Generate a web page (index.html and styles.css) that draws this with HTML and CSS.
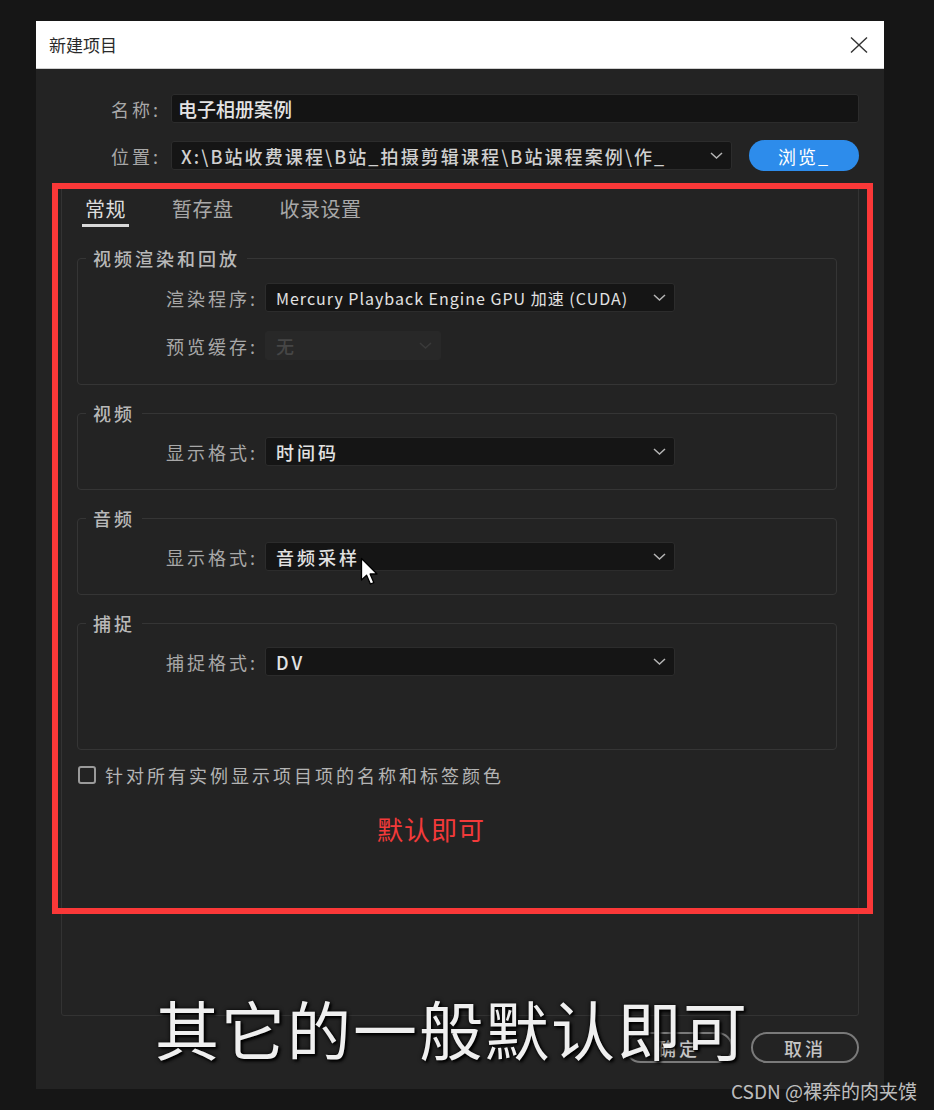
FILE: index.html
```html
<!DOCTYPE html>
<html lang="zh-CN">
<head>
    <meta charset="UTF-8">
    <meta name="viewport" content="width=device-width, initial-scale=1.0">
    <title>新建项目</title>
    <link rel="stylesheet" href="styles.css">
</head>
<body>
    <div class="dialog">
        <div class="titlebar">
            <span class="title">新建项目</span>
            <button class="close-button" aria-label="关闭">
                <svg width="18" height="16" viewBox="0 0 18 16"><path d="M1 0.5 L17 15.5 M17 0.5 L1 15.5" stroke="#333" stroke-width="1.4" fill="none"/></svg>
            </button>
        </div>

        <div class="dialog-body">
            <div class="form-row">
                <span class="form-label">名称:</span>
                <div class="text-input">电子相册案例</div>
            </div>
            <div class="form-row location-row">
                <span class="form-label">位置:</span>
                <div class="select path-select">
                    <span class="select-value">X:\B站收费课程\B站_拍摄剪辑课程\B站课程案例\作_</span>
                    <svg class="chevron" width="13" height="7" viewBox="0 0 13 7"><path d="M1 1 L6.5 6 L12 1" stroke="#b5b5b5" stroke-width="1.5" fill="none"/></svg>
                </div>
                <button class="browse-button">浏览_</button>
            </div>

            <div class="tab-panel">
                <div class="tabs">
                    <span class="tab active">常规</span>
                    <span class="tab">暂存盘</span>
                    <span class="tab">收录设置</span>
                </div>

                <fieldset class="group first-group">
                    <legend>视频渲染和回放</legend>
                    <div class="group-row">
                        <span class="group-label">渲染程序:</span>
                        <div class="select">
                            <span class="select-value latin">Mercury Playback Engine GPU 加速 (CUDA)</span>
                            <svg class="chevron" width="13" height="7" viewBox="0 0 13 7"><path d="M1 1 L6.5 6 L12 1" stroke="#b5b5b5" stroke-width="1.5" fill="none"/></svg>
                        </div>
                    </div>
                    <div class="group-row">
                        <span class="group-label">预览缓存:</span>
                        <div class="select disabled">
                            <span class="select-value">无</span>
                            <svg class="chevron" width="13" height="7" viewBox="0 0 13 7"><path d="M1 1 L6.5 6 L12 1" stroke="#3a3a3a" stroke-width="1.5" fill="none"/></svg>
                        </div>
                    </div>
                </fieldset>

                <fieldset class="group">
                    <legend>视频</legend>
                    <div class="group-row">
                        <span class="group-label">显示格式:</span>
                        <div class="select">
                            <span class="select-value">时间码</span>
                            <svg class="chevron" width="13" height="7" viewBox="0 0 13 7"><path d="M1 1 L6.5 6 L12 1" stroke="#b5b5b5" stroke-width="1.5" fill="none"/></svg>
                        </div>
                    </div>
                </fieldset>

                <fieldset class="group">
                    <legend>音频</legend>
                    <div class="group-row">
                        <span class="group-label">显示格式:</span>
                        <div class="select">
                            <span class="select-value">音频采样</span>
                            <svg class="chevron" width="13" height="7" viewBox="0 0 13 7"><path d="M1 1 L6.5 6 L12 1" stroke="#b5b5b5" stroke-width="1.5" fill="none"/></svg>
                        </div>
                    </div>
                </fieldset>

                <fieldset class="group tall-group">
                    <legend>捕捉</legend>
                    <div class="group-row">
                        <span class="group-label">捕捉格式:</span>
                        <div class="select">
                            <span class="select-value">DV</span>
                            <svg class="chevron" width="13" height="7" viewBox="0 0 13 7"><path d="M1 1 L6.5 6 L12 1" stroke="#b5b5b5" stroke-width="1.5" fill="none"/></svg>
                        </div>
                    </div>
                </fieldset>

                <label class="check-row">
                    <span class="checkbox"></span>
                    针对所有实例显示项目项的名称和标签颜色
                </label>

                <div class="note">默认即可</div>
            </div>

            <div class="button-row">
                <button class="pill-button">确定</button>
                <button class="pill-button">取消</button>
            </div>
        </div>
    </div>

    <!-- 视频标注层 -->
    <div class="mark-box"></div>
    <svg class="cursor" width="20" height="29" viewBox="0 0 20 29">
        <path d="M1.5 1.5 L1.5 23 L6.6 18.2 L10.4 27 L13.8 25.6 L10.1 17 L17 17 Z" fill="#fff" stroke="#000" stroke-width="1.3" stroke-linejoin="round"/>
    </svg>
    <div class="subtitle">其它的一般默认即可</div>
    <div class="watermark">CSDN @裸奔的肉夹馍</div>
</body>
</html>
```

FILE: styles.css
```css
body {
    margin: 0;
    padding: 21px 0 0 36px;
    background: #161616;
    font-family: "Noto Sans CJK SC", "Noto Sans", sans-serif;
    color: #b4b4b4;
    position: relative;
    min-height: 1110px;
    box-sizing: border-box;
}

.dialog {
    width: 848px;
}

.titlebar {
    height: 48px;
    background: #ffffff;
    border-bottom: 1px solid #d0d0d0;
    box-sizing: border-box;
    display: flex;
    align-items: center;
    justify-content: space-between;
    padding: 0 16px 0 13px;
}

.title {
    font-size: 17px;
    color: #2a2a2a;
}

.close-button {
    background: none;
    border: none;
    padding: 0;
    display: flex;
}

.dialog-body {
    background: #232323;
    height: 1020px;
    box-sizing: border-box;
    padding: 25px 25px 0 25px;
}

.form-row {
    display: flex;
    align-items: center;
    height: 29px;
}

.location-row {
    margin-top: 18px;
}

.form-label {
    width: 100px;
    margin-right: 10px;
    text-align: right;
    font-size: 18px;
    letter-spacing: 3px;
    color: #a8a8a8;
}

.text-input {
    flex: 1;
    height: 29px;
    box-sizing: border-box;
    background: #141414;
    border: 1px solid #2c2c2c;
    border-radius: 3px;
    padding-left: 6px;
    font-size: 19px;
    line-height: 27px;
    font-weight: 500;
    color: #e4e4e4;
}

.select {
    width: 410px;
    height: 29px;
    box-sizing: border-box;
    background: #151515;
    border: 1px solid #2c2c2c;
    border-radius: 3px;
    padding: 0 8px 0 10px;
    display: flex;
    align-items: center;
    justify-content: space-between;
}

.select-value {
    font-size: 18px;
    letter-spacing: 3px;
    font-weight: 500;
    color: #e2e2e2;
    white-space: nowrap;
}

.select-value.latin {
    font-size: 16px;
    letter-spacing: 1px;
    font-weight: 400;
}

.path-select {
    flex: 1;
    width: auto;
    padding-left: 9px;
}

.path-select .select-value {
    letter-spacing: 2.1px;
    color: #d0d0d0;
}

.select.disabled {
    width: 176px;
    background: #282828;
    border-color: #282828;
}

.select.disabled .select-value {
    color: #464646;
}

.browse-button {
    width: 110px;
    height: 31px;
    margin-left: 17px;
    border: none;
    border-radius: 16px;
    background: #2d8ceb;
    color: #ffffff;
    font-family: inherit;
    font-size: 18px;
    letter-spacing: 2px;
}

.tab-panel {
    margin-top: 16px;
    height: 830px;
    box-sizing: border-box;
    border: 1px solid #333333;
    border-radius: 3px;
    padding: 10px 0 0 0;
}

.tabs {
    display: flex;
    gap: 40px;
    padding-left: 20px;
}

.tab {
    padding: 0 3px 3px;
    line-height: 24px;
    font-size: 20px;
    letter-spacing: 0.5px;
    color: #a8a8a8;
    border-bottom: 3px solid transparent;
}

.tab.active {
    color: #dcdcdc;
    border-bottom-color: #d8d8d8;
}

.group {
    margin: 17px 0 0 15px;
    width: 760px;
    box-sizing: border-box;
    padding: 13px 0 23px;
    border: 1px solid #353535;
    border-radius: 4px;
    min-inline-size: 0;
}

.first-group {
    margin-top: 20px;
    padding: 14px 0 24px;
}

.first-group .group-row + .group-row {
    margin-top: 19px;
}

.tall-group {
    padding-bottom: 73px;
}

.group legend {
    margin-left: 8px;
    padding: 0 7px;
    font-size: 18px;
    line-height: 22px;
    letter-spacing: 3px;
    font-weight: 500;
    color: #b8b8b8;
}

.group-row {
    display: flex;
    align-items: center;
    height: 29px;
}

.group-row + .group-row {
    margin-top: 18px;
}

.group-label {
    width: 180px;
    margin-right: 7px;
    text-align: right;
    font-size: 18px;
    letter-spacing: 3px;
    color: #a8a8a8;
}

.check-row {
    display: flex;
    align-items: center;
    gap: 9px;
    margin: 14px 0 0 16px;
    font-size: 18px;
    line-height: 22px;
    letter-spacing: 3px;
    color: #b4b4b4;
}

.checkbox {
    width: 18px;
    height: 18px;
    box-sizing: border-box;
    border: 2px solid #9a9a9a;
    border-radius: 3px;
}

.note {
    margin: 26px 0 0 315px;
    font-size: 26px;
    line-height: 34px;
    letter-spacing: 1px;
    color: #f23a3a;
}

.button-row {
    display: flex;
    justify-content: flex-end;
    gap: 18px;
    margin-top: 16px;
}

.pill-button {
    width: 108px;
    height: 31px;
    background: transparent;
    border: 2px solid #7a7a7a;
    border-radius: 16px;
    color: #c4c4c4;
    font-family: inherit;
    font-size: 18px;
    letter-spacing: 3px;
    font-weight: 500;
}

/* 标注与字幕 */
.mark-box {
    position: absolute;
    left: 52px;
    top: 183px;
    width: 821px;
    height: 731px;
    box-sizing: border-box;
    border: 6px solid #fa3838;
}

.cursor {
    position: absolute;
    left: 360px;
    top: 557px;
}

.subtitle {
    position: absolute;
    left: 155px;
    top: 995px;
    font-size: 64px;
    line-height: 64px;
    letter-spacing: 2px;
    color: #efefef;
    text-shadow: 0 0 4px rgba(0, 0, 0, 0.9), 2px 2px 3px #000;
    white-space: nowrap;
}

.watermark {
    position: absolute;
    right: 17px;
    top: 1079px;
    font-size: 19px;
    line-height: 24px;
    color: rgba(235, 235, 235, 0.8);
}
```
